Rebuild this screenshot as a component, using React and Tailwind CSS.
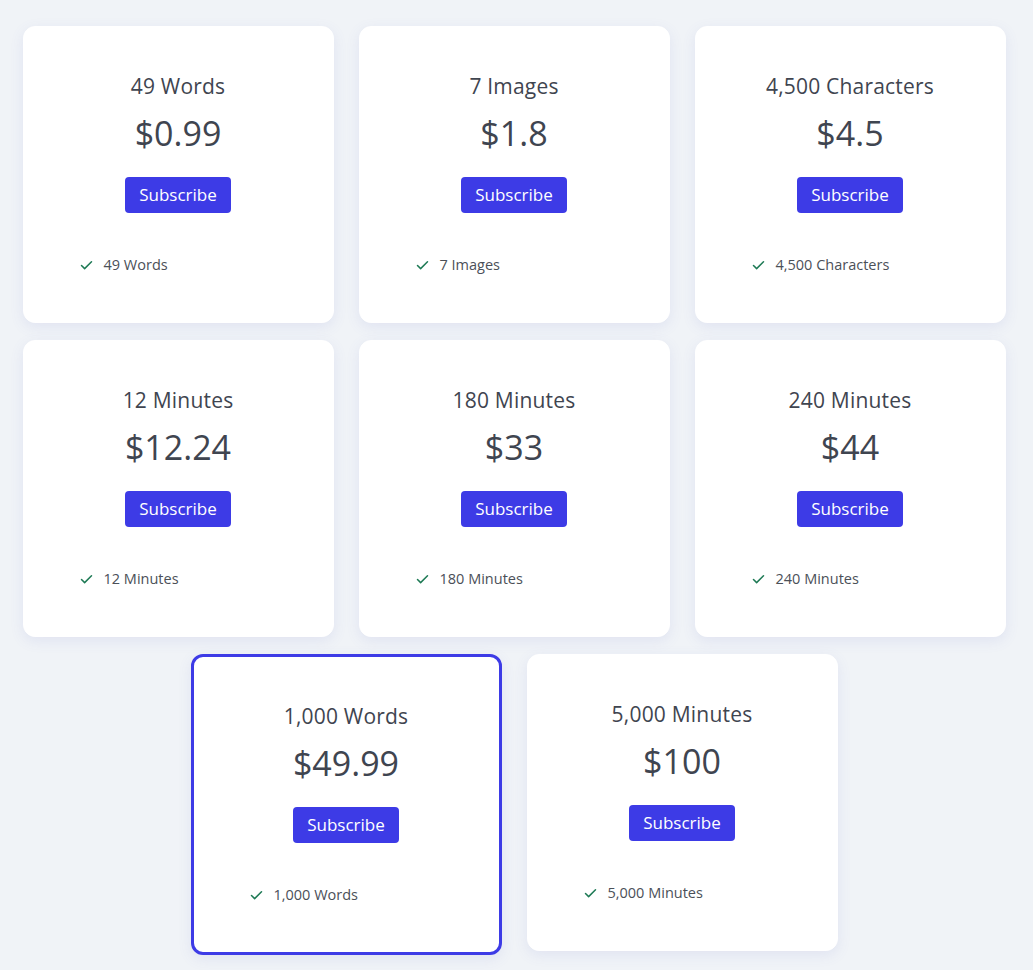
import { Check } from 'lucide-react';

const plans = [
    { title: '49 Words', price: '$0.99' },
    { title: '7 Images', price: '$1.8' },
    { title: '4,500 Characters', price: '$4.5' },
    { title: '12 Minutes', price: '$12.24' },
    { title: '180 Minutes', price: '$33' },
    { title: '240 Minutes', price: '$44' },
    { title: '1,000 Words', price: '$49.99', active: true },
    { title: '5,000 Minutes', price: '$100' },
];

const PlanCard = ({ plan }) => (
    <div
        className={`w-[311px] bg-white rounded-xl shadow-[0_4px_14px_rgba(90,100,200,0.10)] flex flex-col items-center pt-[45px] pb-[47px] ${
            plan.active ? 'border-[3px] border-[#3d3be6]' : 'border border-white'
        }`}
    >
        <h3 className="text-[21px] leading-[28px] text-[#3f4550] font-normal tracking-[0.2px]">{plan.title}</h3>
        <div className="mt-[13px] text-[34px] leading-[40px] text-[#3f4550] font-medium">{plan.price}</div>
        <button className="mt-[24px] h-[36px] px-[14px] rounded bg-[#3d3be6] text-white text-[17px]">
            Subscribe
        </button>
        <ul className="mt-[42px] self-stretch pl-[55px]">
            <li className="flex items-center gap-[10px] h-[20px] text-[14.5px] text-[#4b5058]">
                <Check className="w-[15px] h-[15px] text-[#1e7a55]" strokeWidth={2.4} />
                <span>{plan.title}</span>
            </li>
        </ul>
    </div>
);

const App = () => {
    return (
        <div className="min-h-screen bg-[#f0f3f7] font-['Open_Sans',sans-serif]">
            <div className="flex flex-wrap justify-center items-start gap-x-[25px] gap-y-[17px] pl-[22px] pr-[27px] pt-[26px] pb-[20px]">
                {plans.map((plan) => (
                    <PlanCard key={plan.title} plan={plan} />
                ))}
            </div>
        </div>
    );
};

export default App;
